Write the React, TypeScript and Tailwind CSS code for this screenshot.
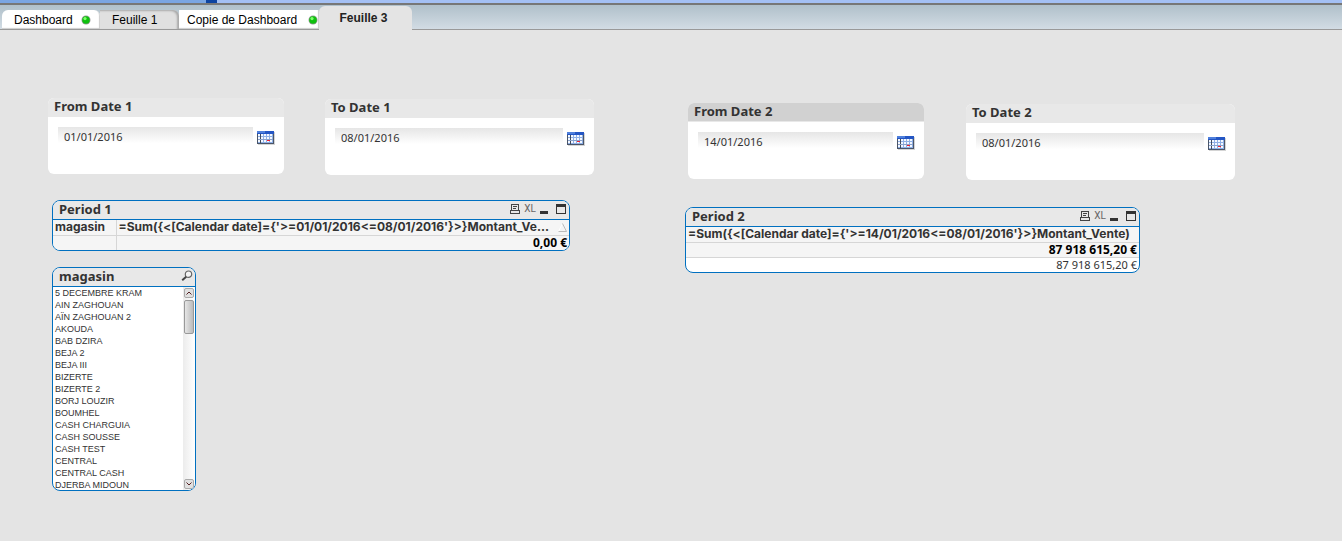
import React from 'react';

const STORES = [
  '5 DECEMBRE KRAM',
  'AIN ZAGHOUAN',
  'AÏN ZAGHOUAN 2',
  'AKOUDA',
  'BAB DZIRA',
  'BEJA 2',
  'BEJA III',
  'BIZERTE',
  'BIZERTE 2',
  'BORJ LOUZIR',
  'BOUMHEL',
  'CASH CHARGUIA',
  'CASH SOUSSE',
  'CASH TEST',
  'CENTRAL',
  'CENTRAL CASH',
  'DJERBA MIDOUN',
];

const StatusDot = () => (
  <svg width="10" height="10" viewBox="0 0 10 10" className="shrink-0" aria-hidden="true">
    <circle cx="5" cy="5" r="4.5" fill="#9a9a9a" />
    <circle cx="5" cy="5" r="3.8" fill="#0fc00f" />
    <circle cx="4" cy="3.6" r="1.6" fill="#7dff6a" />
  </svg>
);

const CalendarIcon = () => (
  <svg width="18" height="14" viewBox="0 0 18 14" shapeRendering="crispEdges" aria-hidden="true">
    <rect x="1" y="1" width="17" height="13" fill="#d4d4d4" />
    <rect width="17" height="13" fill="#4a5568" />
    <rect x="1" y="3" width="15" height="9" fill="#8fb0e6" />
    <g fill="#f4f8ff">
      {[3, 6, 9].map((y) =>
        [1, 4, 7, 10, 13].map((x) => <rect key={`${x}-${y}`} x={x} y={y} width="2" height="2" />)
      )}
    </g>
    <path d="M3 3h1v9h-1z" fill="#3f4a5c" />
    <path d="M1 8h15v1h-15z" fill="#8aa2cc" />
    <rect width="17" height="3" fill="#2456c4" />
    <rect width="8" height="2" fill="#4f80dc" />
    <rect x="10" y="9" width="3" height="1" fill="#f02030" />
  </svg>
);

const SearchIcon = () => (
  <svg width="12" height="12" viewBox="0 0 12 12" fill="none" aria-hidden="true">
    <circle cx="7.5" cy="4.2" r="3.2" fill="#f4f4f4" stroke="#666" strokeWidth="1.2" />
    <path d="M5.2 6.8L1.2 10.2" stroke="#444" strokeWidth="2" />
  </svg>
);

const PrintIcon = () => (
  <svg width="10" height="10" viewBox="0 0 10 10" fill="none" stroke="#444" shapeRendering="crispEdges" aria-hidden="true">
    <path d="M1.5 6.5v-6h7v6" />
    <path d="M3 2.5h4M3 4.5h3" />
    <path d="M0 6.5h10M.5 6v3.5h9V6" />
  </svg>
);

interface TabProps {
  label: string;
  className: string;
  dot?: boolean;
}

const Tab = ({ label, className, dot }: TabProps) => (
  <button type="button" role="tab" className={`flex items-center whitespace-nowrap ${className}`}>
    <span>{label}</span>
    {dot && <StatusDot />}
  </button>
);

interface DateBoxProps {
  id: string;
  title: string;
  value: string;
  className: string;
  active?: boolean;
}

const DateBox = ({ id, title, value, className, active }: DateBoxProps) => (
  <section className={`shrink-0 overflow-hidden rounded-md bg-white ${className}`}>
    <label
      htmlFor={id}
      className={`block h-[19px] px-1.5 text-[13px] leading-4 font-bold ${
        active ? 'border-b border-[#e8e8e8] bg-[#d1d1d1]' : 'bg-[#e8e8e8]'
      }`}
    >
      {title}
    </label>
    <div className="flex h-[57px] items-start pt-2.5 pr-[9px] pl-2.5">
      <input
        id={id}
        type="text"
        defaultValue={value}
        className="h-[18px] min-w-0 flex-1 bg-linear-to-b from-[#e6e6e6] to-white to-90% px-1.5 text-[11px] outline-none"
      />
      <button type="button" aria-label={`${title} calendar`} className="mt-1 ml-1">
        <CalendarIcon />
      </button>
    </div>
  </section>
);

const CaptionButtons = () => (
  <div className="flex items-center gap-1 pr-[3px]">
    <button type="button" aria-label="Print">
      <PrintIcon />
    </button>
    <button type="button" className="font-[Roboto,sans-serif] text-[10px] leading-4 text-[#666]">
      XL
    </button>
    <button type="button" aria-label="Minimize" className="mt-1.5 h-[3px] w-2 bg-[#333]" />
    <button type="button" aria-label="Maximize" className="ml-1 h-[10px] w-[10px] border border-t-3 border-[#333]" />
  </div>
);

interface PeriodProps {
  title: string;
  className: string;
  children: React.ReactNode;
}

const Period = ({ title, className, children }: PeriodProps) => (
  <section className={`overflow-hidden rounded-lg border border-[#0070c0] bg-white ${className}`}>
    <header className="flex h-[19px] items-start justify-between border-b border-[#0070c0] bg-[#e8e8e8]">
      <h2 className="px-1.5 text-[13px] leading-4 font-bold">{title}</h2>
      <CaptionButtons />
    </header>
    {children}
  </section>
);

const SumArrow = () => (
  <svg width="9" height="9" viewBox="0 0 9 9" fill="none" className="ml-auto shrink-0" aria-hidden="true">
    <path d="M.5 8.5L4.5.5" stroke="#fff" />
    <path d="M4.5.5l4 8h-8" stroke="#bbb" />
  </svg>
);

export default function App() {
  return (
    <div className="min-h-screen bg-[#e4e4e4] font-['Noto_Sans',sans-serif] text-[#333]">
      <div className="flex h-[5px] border-b-2 border-[#777]">
        <div className="w-[206px] bg-[#7aa5e2]" />
        <div className="w-[11px] bg-[#0d43a0]" />
        <div className="flex-1 bg-[#a4c0f4]" />
      </div>

      <nav
        role="tablist"
        className="flex h-[25px] items-end border-b border-[#999] bg-linear-to-b from-[#b0c0ca] to-[#d2dce4] pl-0.5 font-['Liberation_Sans',sans-serif] text-[12px] text-black"
      >
        <Tab label="Dashboard" dot className="h-[19px] w-[98px] justify-between rounded-t-md bg-white pr-[9px] pl-3 shadow-[inset_-1px_-1px_1px_#ccc]" />
        <Tab label="Feuille 1" className="h-[19px] w-[79px] rounded-tr-md bg-[#e0e0e0] pl-3 shadow-[inset_-2px_1px_2px_#aaa]" />
        <Tab label="Copie de Dashboard" dot className="h-[19px] w-[140px] justify-between bg-white pr-px pl-2 shadow-[inset_-1px_-1px_1px_#ccc]" />
        <Tab label="Feuille 3" className="-mb-px h-6 w-[93px] justify-center rounded-t-md bg-[#e4e4e4] pr-1 font-bold text-[#222]" />
      </nav>

      <main className="flex items-start pl-12">
        <div className="w-[637px] shrink-0 pt-[68px]">
          <div className="flex items-start gap-[41px]">
            <DateBox id="from1" title="From Date 1" value="01/01/2016" className="w-[236px]" />
            <DateBox id="to1" title="To Date 1" value="08/01/2016" className="mt-px w-[269px]" />
          </div>

          <Period title="Period 1" className="mt-[25px] ml-1 w-[518px]">
            <table className="w-full table-fixed border-collapse bg-[#f5f5f5] text-[12px] leading-[14px]">
              <thead>
                <tr className="h-[15px] border-b border-[#d6d6d6] font-[Inter,sans-serif]">
                  <th className="w-[63px] border-r border-[#d6d6d6] px-0.5 text-left">magasin</th>
                  <th className="px-0.5 text-left whitespace-nowrap">
                    <div className="flex items-center">
                      <span>{"=Sum({<[Calendar date]={'>=01/01/2016<=08/01/2016'}>}Montant_Ve..."}</span>
                      <SumArrow />
                    </div>
                  </th>
                </tr>
              </thead>
              <tbody>
                <tr className="h-[15px]">
                  <td className="border-r border-[#d6d6d6]" />
                  <td className="px-0.5 text-right font-bold text-black">0,00 €</td>
                </tr>
              </tbody>
            </table>
          </Period>

          <section className="mt-4 ml-1 w-36 overflow-hidden rounded-lg border border-[#0070c0] bg-white">
            <header className="flex h-[19px] items-start justify-between border-b border-[#0070c0] bg-[#e8e8e8] pr-0.5 pl-1.5">
              <h2 className="text-[13px] leading-4 font-bold">magasin</h2>
              <button type="button" aria-label="Search magasin" className="mt-0.5">
                <SearchIcon />
              </button>
            </header>
            <div className="flex h-[203px]">
              <ul className="flex-1 overflow-hidden pl-0.5 font-['Liberation_Sans',sans-serif] text-[9px] leading-3">
                {STORES.map((store) => (
                  <li key={store}>{store}</li>
                ))}
              </ul>
              <div className="flex w-3 flex-col items-center bg-linear-to-r from-[#ececec] to-white py-px">
                <button type="button" aria-label="Scroll up" className="flex h-[10px] w-[10px] shrink-0 items-center justify-center rounded-xs border border-[#aaa] bg-[#e0e0e0]">
                  <svg width="6" height="4" viewBox="0 0 6 4" fill="none" stroke="#522" aria-hidden="true">
                    <path d="M.5 3.5L3 1l2.5 2.5" />
                  </svg>
                </button>
                <div className="mt-0.5 h-[34px] w-[10px] rounded-xs border border-[#999] bg-linear-to-r from-[#e6e6e6] to-[#bbb]" />
                <button type="button" aria-label="Scroll down" className="mt-auto flex h-[10px] w-[10px] shrink-0 items-center justify-center rounded-xs border border-[#aaa] bg-[#e0e0e0]">
                  <svg width="6" height="4" viewBox="0 0 6 4" fill="none" stroke="#522" aria-hidden="true">
                    <path d="M.5.5L3 3 5.5.5" />
                  </svg>
                </button>
              </div>
            </div>
          </section>
        </div>

        <div className="shrink-0 pt-[73px]">
          <div className="flex items-start gap-[42px] pl-[3px]">
            <DateBox id="from2" title="From Date 2" value="14/01/2016" active className="w-[236px]" />
            <DateBox id="to2" title="To Date 2" value="08/01/2016" className="mt-px w-[269px]" />
          </div>

          <Period title="Period 2" className="mt-[27px] w-[455px]">
            <table className="w-full table-fixed border-collapse text-[12px] leading-[14px]">
              <thead>
                <tr className="h-[15px] border-b border-[#d6d6d6] bg-[#f5f5f5] font-[Inter,sans-serif]">
                  <th className="px-0.5 text-left whitespace-nowrap">
                    {"=Sum({<[Calendar date]={'>=14/01/2016<=08/01/2016'}>}Montant_Vente)"}
                  </th>
                </tr>
              </thead>
              <tbody>
                <tr className="h-[15px] border-b border-[#d6d6d6] bg-[#f5f5f5]">
                  <td className="px-0.5 text-right font-bold text-black">87 918 615,20 €</td>
                </tr>
                <tr className="h-[15px]">
                  <td className="px-0.5 text-right text-[11px]">87 918 615,20 €</td>
                </tr>
              </tbody>
            </table>
          </Period>
        </div>
      </main>
    </div>
  );
}
